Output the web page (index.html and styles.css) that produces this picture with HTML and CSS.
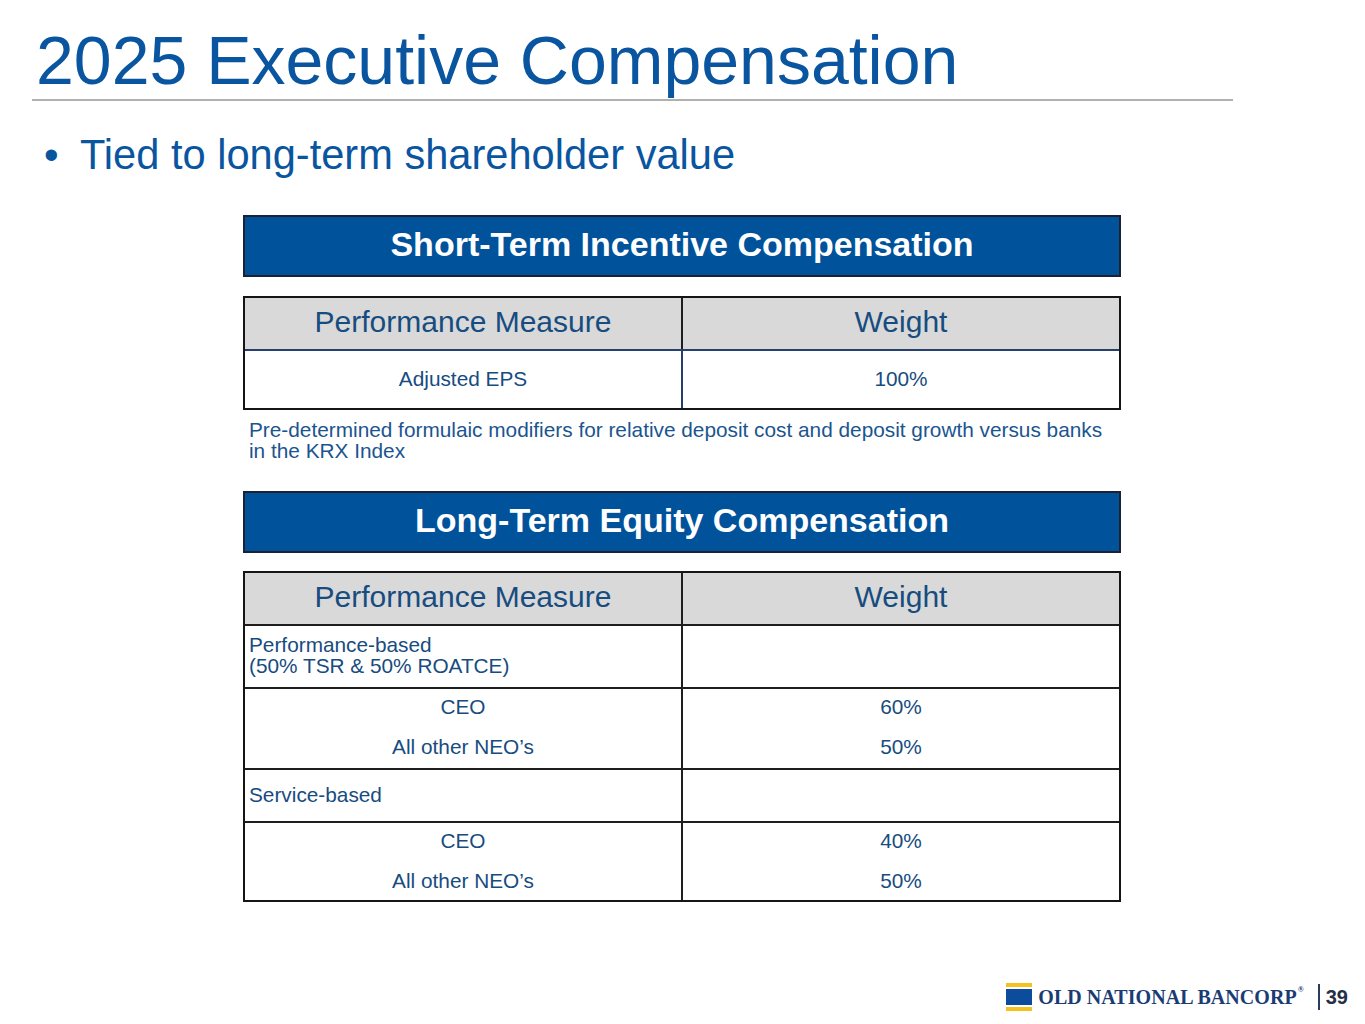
FILE: index.html
```html
<!DOCTYPE html>
<html lang="en">
<head>
<meta charset="utf-8">
<title>2025 Executive Compensation</title>
<link rel="stylesheet" href="styles.css">
</head>
<body>
<div class="page">
  <h1 class="title">2025 Executive Compensation</h1>
  <div class="rule"></div>
  <div class="bullet"><span class="dot">•</span><span>Tied to long-term shareholder value</span></div>

  <div class="content">
    <div class="banner">Short-Term Incentive Compensation</div>
    <div class="tbl tbl-short">
      <div class="row head">
        <div class="cell">Performance Measure</div>
        <div class="cell">Weight</div>
      </div>
      <div class="row r-eps">
        <div class="cell">Adjusted EPS</div>
        <div class="cell">100%</div>
      </div>
    </div>
    <p class="note">Pre-determined formulaic modifiers for relative deposit cost and deposit growth versus banks in the KRX Index</p>

    <div class="banner banner-long">Long-Term Equity Compensation</div>
    <div class="tbl tbl-long">
      <div class="row head">
        <div class="cell">Performance Measure</div>
        <div class="cell">Weight</div>
      </div>
      <div class="row r-perf">
        <div class="cell left">Performance-based<br>(50% TSR &amp; 50% ROATCE)</div>
        <div class="cell"></div>
      </div>
      <div class="row r-pair r-pair1">
        <div class="cell stack"><span>CEO</span><span>All other NEO’s</span></div>
        <div class="cell stack"><span>60%</span><span>50%</span></div>
      </div>
      <div class="row r-service">
        <div class="cell left">Service-based</div>
        <div class="cell"></div>
      </div>
      <div class="row r-pair r-pair2">
        <div class="cell stack"><span>CEO</span><span>All other NEO’s</span></div>
        <div class="cell stack"><span>40%</span><span>50%</span></div>
      </div>
    </div>
  </div>

  <div class="footer">
    <svg class="logo-mark" width="26" height="28" viewBox="0 0 26 28" aria-hidden="true">
      <rect x="0" y="0" width="26" height="4" fill="#f4c21c"/>
      <rect x="0" y="6" width="26" height="16" fill="#0b4c9c"/>
      <rect x="0" y="24" width="26" height="4" fill="#f4c21c"/>
    </svg>
    <span class="logo-text">OLD NATIONAL BANCORP<sup class="reg">®</sup></span>
    <span class="sep"></span>
    <span class="pagenum">39</span>
  </div>
</div>
</body>
</html>
```

FILE: styles.css
```css
html, body {
  margin: 0;
  padding: 0;
  background: #ffffff;
}

.page {
  width: 1365px;
  height: 1024px;
  padding-top: 26px;
  box-sizing: border-box;
  font-family: "Liberation Sans", Arial, sans-serif;
  display: flex;
  flex-direction: column;
  overflow: hidden;
}

.title {
  margin: 0 0 0 36px;
  font-size: 68px;
  line-height: 68px;
  font-weight: 400;
  color: #0a55a0;
  white-space: nowrap;
}

.rule {
  margin: 5px 0 0 32px;
  width: 1201px;
  height: 2px;
  background: #b0b0b0;
}

.bullet {
  margin: 33px 0 0 44px;
  display: flex;
  font-size: 41.6px;
  line-height: 41.6px;
  color: #0a55a0;
  white-space: nowrap;
}

.bullet .dot {
  width: 36px;
  flex: none;
}

.content {
  margin: 39px 0 0 243px;
  width: 878px;
  display: flex;
  flex-direction: column;
}

.banner {
  height: 62px;
  box-sizing: border-box;
  border: 2px solid #1b2233;
  background: #00529b;
  color: #ffffff;
  font-weight: 700;
  font-size: 34px;
  padding-bottom: 3px;
  display: flex;
  align-items: center;
  justify-content: center;
}

.banner-long {
  margin-top: 30px;
}

.tbl {
  margin-top: 19px;
  border: 2px solid #151515;
  display: flex;
  flex-direction: column;
}

.tbl-long {
  margin-top: 18px;
}

.row {
  display: grid;
  grid-template-columns: 436px 1fr;
  grid-template-rows: minmax(0, 1fr);
  border-top: 2px solid #1e1e1e;
  box-sizing: border-box;
}

.row:first-child {
  border-top: none;
}

.cell {
  display: flex;
  align-items: center;
  justify-content: center;
  color: #174c80;
  font-size: 20.8px;
  line-height: 21px;
  padding-bottom: 2px;
  min-height: 0;
}

.cell + .cell {
  border-left: 2px solid #1e1e1e;
}

.head {
  height: 51px;
  background: #d9d9d9;
}

.head .cell {
  font-size: 30px;
  line-height: 30px;
  padding-bottom: 2px;
}

.tbl-short .r-eps {
  border-top-color: #26406e;
}

.tbl-short .r-eps .cell + .cell {
  border-left-color: #26406e;
}

.r-eps {
  height: 59px;
}

.left {
  justify-content: flex-start;
  text-align: left;
  padding-left: 4px;
}

.r-perf {
  height: 63px;
}

.r-service {
  height: 53px;
}

.r-pair1 {
  height: 81px;
}

.r-pair2 {
  height: 79px;
}

.stack {
  flex-direction: column;
  line-height: 40px;
  padding-bottom: 3px;
}

.r-pair2 .stack {
  padding-bottom: 0;
}

.note {
  margin: 9px 0 0 0;
  padding: 0 6px;
  font-size: 20.8px;
  line-height: 21px;
  color: #1a5590;
}

.footer {
  margin-top: auto;
  margin-bottom: 13px;
  padding-right: 17px;
  display: flex;
  justify-content: flex-end;
  align-items: center;
  height: 28px;
}

.logo-mark {
  display: block;
  flex: none;
}

.logo-text {
  margin-left: 6px;
  font-family: "Liberation Serif", "Times New Roman", serif;
  font-weight: 700;
  font-size: 20px;
  letter-spacing: 0.05px;
  color: #1b3c73;
  white-space: nowrap;
}

.reg {
  font-size: 8px;
  vertical-align: top;
  line-height: 1;
  margin-left: 1px;
}

.sep {
  margin-left: 14px;
  width: 2px;
  height: 26px;
  background: #2a3a60;
}

.pagenum {
  margin-left: 6px;
  font-weight: 700;
  font-size: 20px;
  color: #262f45;
}
```
